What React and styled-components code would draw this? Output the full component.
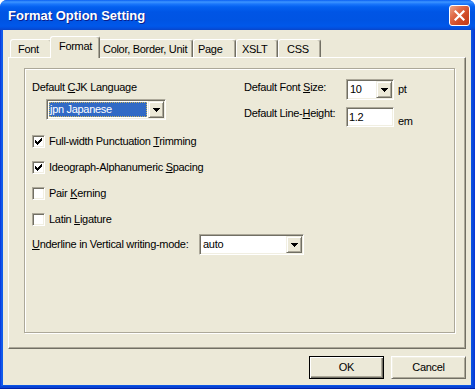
import React from "react";
import styled, { createGlobalStyle } from "styled-components";

const GlobalStyle = createGlobalStyle`
  html, body {
    margin: 0;
    padding: 0;
    background: #ffffff;
  }
  body {
    font-family: "Liberation Sans", Arial, sans-serif;
    font-size: 11px;
    letter-spacing: -0.3px;
    color: #000;
  }
  * {
    box-sizing: border-box;
  }
`;

const tabs = [
  { label: "Font", width: 42, pad: 7 },
  { label: "Format", width: 46, pad: 6, active: true },
  { label: "Color, Border, Unit", width: 95, pad: 4 },
  { label: "Page", width: 43, pad: 4 },
  { label: "XSLT", width: 42, pad: 5 },
  { label: "CSS", width: 43, pad: 8 },
];

const Arrow = () => (
  <svg width="7" height="4" viewBox="0 0 7 4" shapeRendering="crispEdges">
    <path d="M0 0h7v1h-1v1h-1v1h-1v1h-1v-1h-1v-1h-1v-1h-1z" fill="#000" />
  </svg>
);

const Check = () => (
  <svg width="7" height="7" viewBox="0 0 7 7" shapeRendering="crispEdges">
    <path
      d="M0 2h1v1h1v1h1v-1h1v-1h1v-1h1v-1h1v3h-1v1h-1v1h-1v1h-1v1h-1v-1h-1v-1h-1z"
      fill="#000"
    />
  </svg>
);

const CloseIcon = () => (
  <svg width="11" height="11" viewBox="0 0 11 11">
    <path d="M1.5 1.5l8 8M9.5 1.5l-8 8" stroke="#fff" strokeWidth="2.2" strokeLinecap="square" />
  </svg>
);

const Combo = ({ width, value, selected }) => (
  <ComboBox $w={width}>
    <ComboText $selected={selected}>{value}</ComboText>
    <DropButton>
      <Arrow />
    </DropButton>
  </ComboBox>
);

const CheckRow = ({ checked, children }) => (
  <CheckLine>
    <CheckBox>{checked && <Check />}</CheckBox>
    <span>{children}</span>
  </CheckLine>
);

const App = () => {
  return (
    <>
      <GlobalStyle />
      <Window>
        <TitleBar>
          <TitleText>Format Option Setting</TitleText>
          <CloseButton>
            <CloseIcon />
          </CloseButton>
        </TitleBar>
        <Frame>
          <Client>
            <TabStrip>
              {tabs.map((t) => (
                <Tab key={t.label} $w={t.width} $pad={t.pad} $active={t.active}>
                  {t.label}
                </Tab>
              ))}
            </TabStrip>
            <Panel>
              <GroupBox>
                <TopSection>
                  <LeftCol>
                    <Label $top={2}>
                      Default <u>C</u>JK Language
                    </Label>
                    <Indent>
                      <Combo width={120} value="jpn Japanese" selected />
                    </Indent>
                  </LeftCol>
                  <RightGrid>
                    <Label $top={2}>
                      Default Font <u>S</u>ize:
                    </Label>
                    <Combo width={48} value="10" />
                    <Unit>pt</Unit>
                    <Label $top={0}>
                      Default Line-<u>H</u>eight:
                    </Label>
                    <TextInput>1.2</TextInput>
                    <Unit $bottom>em</Unit>
                  </RightGrid>
                </TopSection>
                <CheckList>
                  <CheckRow checked>
                    Full-width Punctuation <u>T</u>rimming
                  </CheckRow>
                  <CheckRow checked>
                    Ideograph-Alphanumeric <u>S</u>pacing
                  </CheckRow>
                  <CheckRow>
                    Pair <u>K</u>erning
                  </CheckRow>
                  <CheckRow>
                    Latin <u>L</u>igature
                  </CheckRow>
                </CheckList>
                <FieldRow>
                  <FieldLabel>
                    <u>U</u>nderline in Vertical writing-mode:
                  </FieldLabel>
                  <Combo width={105} value="auto" />
                </FieldRow>
              </GroupBox>
            </Panel>
            <ButtonRow>
              <Button $default>OK</Button>
              <Button>Cancel</Button>
            </ButtonRow>
          </Client>
        </Frame>
      </Window>
    </>
  );
};

const Window = styled.div`
  width: 475px;
  height: 389px;
  display: flex;
  flex-direction: column;
  border-radius: 7px 7px 0 0;
  overflow: hidden;
  background: #0a4fe2;
`;

const TitleBar = styled.div`
  height: 30px;
  flex-shrink: 0;
  display: flex;
  align-items: center;
  justify-content: space-between;
  padding: 0 5px 0 8px;
  background: linear-gradient(
    to bottom,
    #0a5ff2 0px,
    #3d95ff 2px,
    #1a76fb 4px,
    #0360f0 7px,
    #0055e5 12px,
    #0054e3 20px,
    #0058ea 26px,
    #0350e0 28px,
    #0a45c8 30px
  );
`;

const TitleText = styled.div`
  color: #fff;
  font-family: "Liberation Sans", Arial, sans-serif;
  font-weight: bold;
  font-size: 13px;
  letter-spacing: 0;
  line-height: 15px;
  text-shadow: 1px 1px 0 #0a1e8a;
  margin-top: 1px;
`;

const CloseButton = styled.div`
  width: 21px;
  height: 21px;
  border: 1px solid #fff;
  border-radius: 3px;
  display: flex;
  align-items: center;
  justify-content: center;
  background: linear-gradient(135deg, #eba58a 0%, #e06a47 35%, #cf4a25 65%, #c13a17 100%);
`;

const Frame = styled.div`
  flex: 1;
  display: flex;
  padding: 0 4px 4px 3px;
  background: linear-gradient(to right, #0831d9 0px, #1463ee 2px, #0a55e6 3px, #0a55e6 calc(100% - 4px), #0847d8 calc(100% - 2px), #0831d9 100%);
  box-shadow: inset 0 -1px 0 #0021a8, inset 0 -3px 0 #0843d4;
`;

const Client = styled.div`
  flex: 1;
  display: flex;
  flex-direction: column;
  background: #ece9d8;
  padding: 6px 5px 6px 5px;
`;

const TabStrip = styled.div`
  height: 21px;
  display: flex;
  align-items: flex-end;
  padding-left: 2px;
`;

const Tab = styled.div`
  position: relative;
  z-index: ${(p) => (p.$active ? 2 : 1)};
  width: ${(p) => p.$w + (p.$active ? 4 : 0)}px;
  height: ${(p) => (p.$active ? 22 : 18)}px;
  margin: 0 ${(p) => (p.$active ? -2 : 0)}px ${(p) => (p.$active ? -1 : 0)}px;
  padding: 3px 0 0 ${(p) => p.$pad + (p.$active ? 2 : 0)}px;
  background: #ece9d8;
  border-top: 1px solid #fff;
  border-left: 1px solid #fff;
  border-right: 1px solid #716f64;
  box-shadow: inset -1px 0 0 #aca899;
  border-radius: 3px 3px 0 0;
  line-height: 13px;
  white-space: nowrap;
`;

const Panel = styled.div`
  flex: 1;
  display: flex;
  border-top: 1px solid #fff;
  border-left: 1px solid #fff;
  border-right: 1px solid #716f64;
  border-bottom: 1px solid #716f64;
  box-shadow: inset -1px -1px 0 #aca899;
  padding: 10px 10px 15px 15px;
`;

const GroupBox = styled.div`
  flex: 1;
  display: flex;
  flex-direction: column;
  border: 1px solid #aca899;
  box-shadow: 1px 1px 0 #fff, inset 1px 1px 0 #fff;
  padding: 10px 0 0 7px;
`;

const TopSection = styled.div`
  display: flex;
`;

const LeftCol = styled.div`
  width: 212px;
  display: flex;
  flex-direction: column;
`;

const Indent = styled.div`
  margin: 5px 0 0 14px;
`;

const RightGrid = styled.div`
  display: grid;
  grid-template-columns: 102px 48px auto;
  grid-template-rows: 21px 20px;
  row-gap: 7px;
`;

const Label = styled.div`
  line-height: 13px;
  padding-top: ${(p) => p.$top}px;
  white-space: nowrap;
`;

const Unit = styled.div`
  line-height: 13px;
  padding-left: 4px;
  align-self: ${(p) => (p.$bottom ? "end" : "center")};
  margin-bottom: ${(p) => (p.$bottom ? -1 : 0)}px;
`;

const sunken = `
  border: 1px solid;
  border-color: #aca899 #fff #fff #aca899;
  box-shadow: inset 1px 1px 0 #716f64, inset -1px -1px 0 #f1efe2;
`;

const ComboBox = styled.div`
  width: ${(p) => p.$w}px;
  height: 21px;
  display: flex;
  background: #fff;
  ${sunken}
  padding: 1px;
`;

const ComboText = styled.div`
  flex: 1;
  margin: 1px;
  padding-left: 1px;
  line-height: 15px;
  background: ${(p) => (p.$selected ? "#316ac5" : "transparent")};
  color: ${(p) => (p.$selected ? "#fff" : "#000")};
  outline: ${(p) => (p.$selected ? "1px dotted #c8b460" : "none")};
  outline-offset: -1px;
  white-space: nowrap;
  overflow: hidden;
`;

const DropButton = styled.div`
  width: 16px;
  height: 100%;
  display: flex;
  align-items: center;
  justify-content: center;
  background: #ece9d8;
  border: 1px solid;
  border-color: #f1efe2 #716f64 #716f64 #f1efe2;
  box-shadow: inset 1px 1px 0 #fff, inset -1px -1px 0 #aca899;
  padding-top: 1px;
`;

const TextInput = styled.div`
  width: 48px;
  height: 20px;
  background: #fff;
  ${sunken}
  padding: 2px 0 0 2px;
  line-height: 14px;
`;

const CheckList = styled.div`
  display: flex;
  flex-direction: column;
  gap: 13px;
  margin-top: 8px;
`;

const CheckLine = styled.div`
  display: flex;
  align-items: center;
  gap: 4px;
  height: 13px;
  line-height: 13px;
`;

const CheckBox = styled.div`
  width: 13px;
  height: 13px;
  flex-shrink: 0;
  background: #fff;
  ${sunken}
  padding: 2px;
  display: flex;
`;

const FieldRow = styled.div`
  display: flex;
  align-items: center;
  margin-top: 8px;
`;

const FieldLabel = styled.div`
  width: 167px;
  line-height: 13px;
  white-space: nowrap;
`;

const ButtonRow = styled.div`
  display: flex;
  justify-content: flex-end;
  gap: 7px;
  margin-top: 7px;
`;

const Button = styled.div`
  width: 75px;
  height: 23px;
  display: flex;
  align-items: center;
  justify-content: center;
  background: #ece9d8;
  border: 1px solid;
  border-color: ${(p) => (p.$default ? "#000" : "#fff #716f64 #716f64 #fff")};
  box-shadow: ${(p) =>
    p.$default
      ? "inset 1px 1px 0 #fff, inset -1px -1px 0 #716f64, inset -2px -2px 0 #aca899"
      : "inset 1px 1px 0 #f1efe2, inset -1px -1px 0 #aca899"};
  line-height: 13px;
`;

export default App;
